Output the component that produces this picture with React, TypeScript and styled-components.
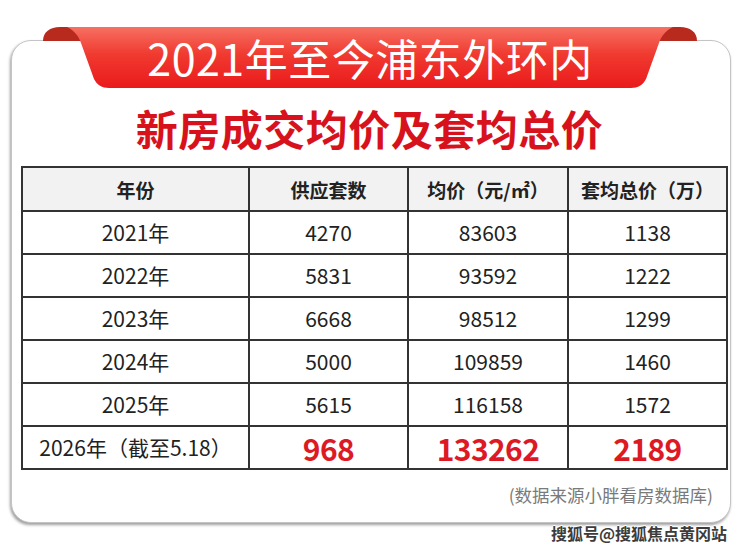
import { FC } from "react";
import styled, { createGlobalStyle } from "styled-components";

const GlobalStyle = createGlobalStyle`
    html, body {
        margin: 0;
        padding: 0;
        background: #ffffff;
    }
    body {
        font-family: "Noto Sans CJK SC", "Noto Sans", sans-serif;
        color: #222222;
    }
`;

const Page = styled.div`
    width: 740px;
    height: 547px;
    box-sizing: border-box;
    padding: 40px 9px 0 11px;
    overflow: hidden;
`;

const Card = styled.div`
    display: flex;
    flex-direction: column;
    padding: 0 12px 15px 9px;
    background: #ffffff;
    border: 1px solid #c4c4c4;
    border-radius: 20px;
    box-shadow: -1px 2px 3px rgba(0, 0, 0, 0.38);
`;

const RibbonWrap = styled.div`
    position: relative;
    height: 61px;
    margin: -14px 21px 0 22px;
`;

const RibbonArt = styled.svg`
    position: absolute;
    inset: 0;
    width: 100%;
    height: 100%;
`;

const RibbonTitle = styled.h1`
    position: relative;
    margin: 0;
    font-size: 43px;
    font-weight: 400;
    line-height: 61px;
    text-align: center;
    color: #ffffff;
    letter-spacing: 0.5px;
`;

const Subtitle = styled.h2`
    margin: 14px 0 0;
    font-size: 42px;
    font-weight: 700;
    line-height: 52px;
    text-align: center;
    color: #d8121c;
    letter-spacing: 0.5px;
`;

const Table = styled.table`
    margin-top: 12px;
    width: 697px;
    border-collapse: collapse;
    table-layout: fixed;
`;

interface CellProps {
    $w?: number;
}

const HeadCell = styled.th<CellProps>`
    width: ${props => props.$w ? `${props.$w}px` : 'auto'};
    height: 42px;
    padding: 0;
    background: #f2f2f2;
    border: 2px solid #333333;
    font-size: 19px;
    font-weight: 700;
    color: #222222;
    text-align: center;
`;

interface DataProps {
    $hot?: boolean;
}

const Cell = styled.td<DataProps>`
    height: 41px;
    padding: 0;
    border: 2px solid #333333;
    text-align: center;
    font-size: ${props => props.$hot ? '30px' : '21px'};
    font-weight: ${props => props.$hot ? 700 : 400};
    color: ${props => props.$hot ? '#dd1a24' : '#222222'};
    letter-spacing: ${props => props.$hot ? '-0.6px' : '0'};
    line-height: 1;
`;

const Source = styled.div`
    margin-top: 13px;
    padding-right: 5px;
    font-size: 17.5px;
    line-height: 24px;
    text-align: right;
    color: #7a7a7a;
`;

const Watermark = styled.div`
    padding-right: 4px;
    font-size: 16px;
    font-weight: 700;
    line-height: 20px;
    text-align: right;
    color: #3c3c3c;
    text-shadow: 1px 0 0 #fff, -1px 0 0 #fff, 0 1px 0 #fff, 0 -1px 0 #fff;
`;

const Ribbon: FC = () => (
    <RibbonWrap>
        <RibbonArt viewBox="0 0 654 61" preserveAspectRatio="none">
            <defs>
                <linearGradient id="ribbonFill" x1="0" y1="0" x2="0" y2="1">
                    <stop offset="0" stopColor="#f67062" />
                    <stop offset="0.45" stopColor="#f03a30" />
                    <stop offset="1" stopColor="#ea1a1c" />
                </linearGradient>
            </defs>
            <path d="M0,14 C0,5 7,0 17,0 L34,0 L40,14 Z" fill="#b8291e" />
            <path d="M654,14 C654,5 647,0 637,0 L620,0 L614,14 Z" fill="#b8291e" />
            <path
                d="M24,0 L630,0 C622,4 618,10 616,16 L603,52 C600,58 595,61 588,61 L66,61 C59,61 54,58 51,52 L38,16 C36,10 32,4 24,0 Z"
                fill="url(#ribbonFill)"
            />
        </RibbonArt>
        <RibbonTitle>2021年至今浦东外环内</RibbonTitle>
    </RibbonWrap>
);

interface IRow {
    year: string;
    supply: string;
    price: string;
    total: string;
}

const rows: IRow[] = [
    { year: '2021年', supply: '4270', price: '83603', total: '1138' },
    { year: '2022年', supply: '5831', price: '93592', total: '1222' },
    { year: '2023年', supply: '6668', price: '98512', total: '1299' },
    { year: '2024年', supply: '5000', price: '109859', total: '1460' },
    { year: '2025年', supply: '5615', price: '116158', total: '1572' },
];

const App: FC = () => (
    <Page>
        <GlobalStyle />
        <Card>
            <Ribbon />
            <Subtitle>新房成交均价及套均总价</Subtitle>
            <Table>
                <thead>
                    <tr>
                        <HeadCell $w={225}>年份</HeadCell>
                        <HeadCell $w={157}>供应套数</HeadCell>
                        <HeadCell $w={158}>均价（元/㎡）</HeadCell>
                        <HeadCell $w={157}>套均总价（万）</HeadCell>
                    </tr>
                </thead>
                <tbody>
                    {rows.map(row => (
                        <tr key={row.year}>
                            <Cell>{row.year}</Cell>
                            <Cell>{row.supply}</Cell>
                            <Cell>{row.price}</Cell>
                            <Cell>{row.total}</Cell>
                        </tr>
                    ))}
                    <tr>
                        <Cell>2026年（截至5.18）</Cell>
                        <Cell $hot>968</Cell>
                        <Cell $hot>133262</Cell>
                        <Cell $hot>2189</Cell>
                    </tr>
                </tbody>
            </Table>
            <Source>(数据来源小胖看房数据库)</Source>
        </Card>
        <Watermark>搜狐号@搜狐焦点黄冈站</Watermark>
    </Page>
);

export default App;
